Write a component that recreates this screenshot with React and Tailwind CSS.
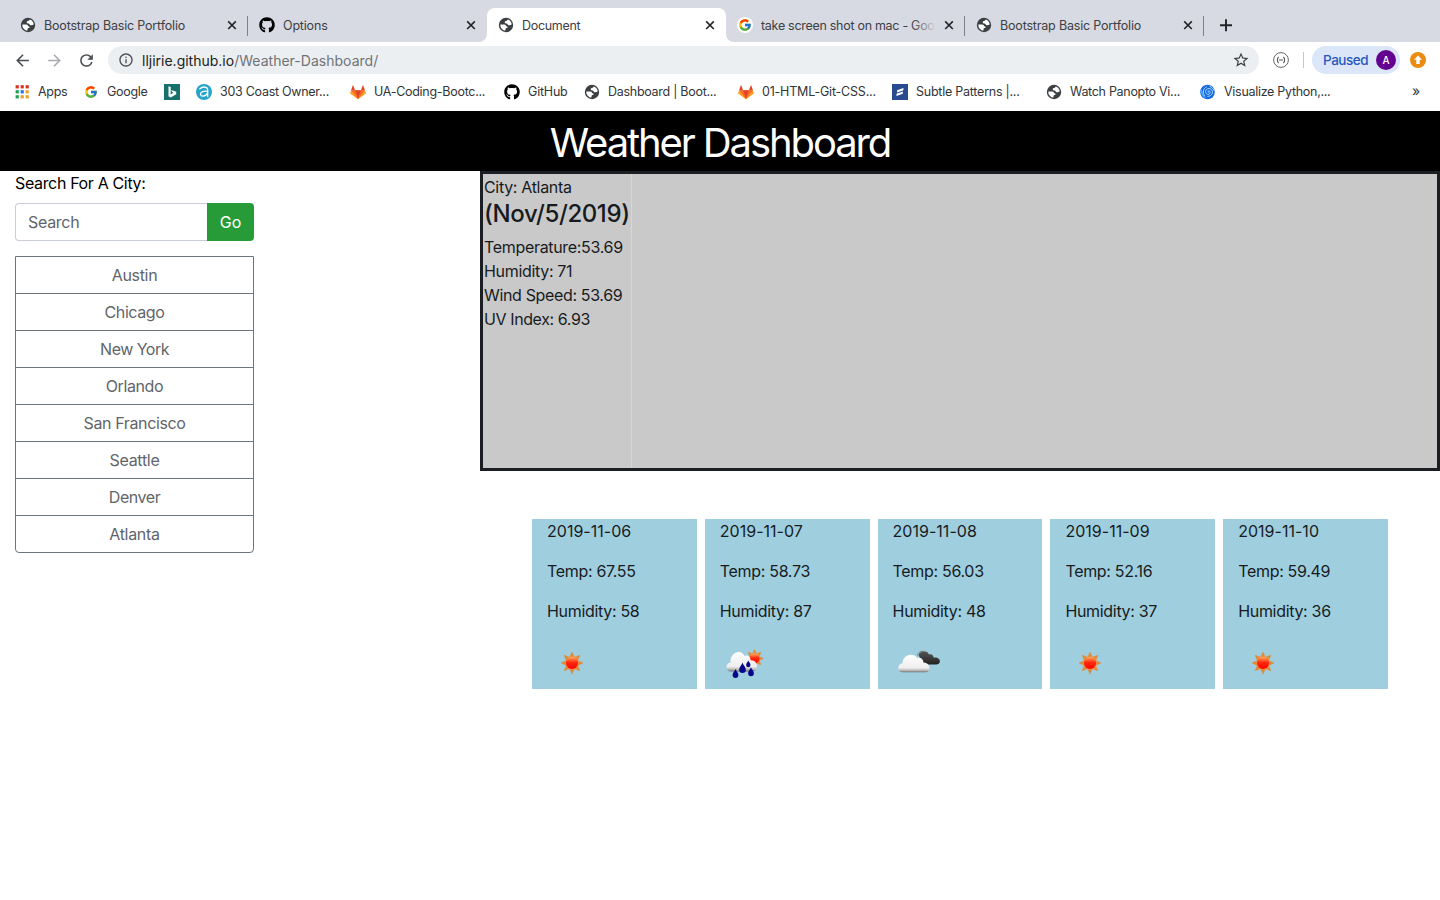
import React from "react";
import { FaGithub } from "react-icons/fa";
import { FcGoogle } from "react-icons/fc";
import { MdArrowBack, MdArrowForward, MdRefresh, MdStarBorder, MdInfoOutline } from "react-icons/md";

function Globe() {
  return (
    <svg viewBox="0 0 16 16" className="size-4 shrink-0">
      <circle cx="8" cy="8" r="7.2" fill="#3c4043" />
      <path d="M9.800 2.500C9.300 3.200 9 3.900 8 4 6.600 4.200 6.500 5.300 7 6c.4.7 1.400.4 2 .7.800.4.600 1.300 1.500 1.500 1 .2 2.300-.1 3.200-.6A5.800 5.800 0 0 0 9.800 2.500Z" fill="#fff" />
      <path d="M2.300 7.500c1.600-.2 3.800-.2 4.900.3.800.4.500 1.200 1.300 1.400.8.200 1.300.6 1 1.300-.2.700-1.700.500-1.900 1.300-.1.700 0 1.300-.4 1.900A5.800 5.800 0 0 1 2.300 7.500Z" fill="#fff" />
    </svg>
  );
}

function GoogleBadge() {
  return (
    <span className="flex size-4 items-center justify-center rounded-full bg-white">
      <FcGoogle className="size-[14px]" />
    </span>
  );
}

function Gitlab() {
  return (
    <svg viewBox="0 0 16 16" className="size-4 shrink-0">
      <path d="M8 15.200 0 9.400 1.100 6.200h13.800L16 9.400Z" fill="#fca326" />
      <path d="M8 15.200 1.100 6.200h3.900ZM8 15.200l6.900-9h-3.900Z" fill="#fc6d26" />
      <path d="m8 15.200 3-9H5Z" fill="#e24329" />
      <path d="M1.100 6.200 3 .7l2 5.500ZM14.900 6.200 13 .7l-2 5.500Z" fill="#e24329" />
    </svg>
  );
}

const appColors = ["#d93025", "#d93025", "#d93025", "#1e9e54", "#2f6fde", "#e8a126", "#1e9e54", "#e8a126", "#e8a126"];

function Apps() {
  return (
    <svg viewBox="0 0 16 16" className="size-4 shrink-0">
      {appColors.map((c, i) => (
        <rect key={i} x={1.600 + (i % 3) * 5} y={1.200 + Math.floor(i / 3) * 5} width="3.200" height="3.200" fill={c} />
      ))}
    </svg>
  );
}

function Bing() {
  return (
    <svg viewBox="0 0 16 16" className="size-4 shrink-0">
      <rect width="16" height="16" fill="#17716b" />
      <path d="M4.500 2.200 6.700 3v7.400l2.700-1.600-1.300-.7-.9-2.200 5 1.800v2.500l-5.500 3.300-2.200-1.300Z" fill="#fff" />
    </svg>
  );
}

function Coast() {
  return (
    <svg viewBox="0 0 16 16" className="size-4 shrink-0">
      <circle cx="8" cy="8" r="8" fill="#27a3cc" />
      <path d="M3.800 4.800C6.500 2.200 11.700 2.300 11.700 6v6.600M11.600 7.200C8 6.700 4.200 7.800 4.500 10.300c.4 2.600 5.600 2.300 7-1.200" fill="none" stroke="#fff" strokeWidth="1.300" strokeLinecap="round" />
    </svg>
  );
}

function Subtle() {
  return (
    <svg viewBox="0 0 16 16" className="size-4 shrink-0">
      <rect width="16" height="16" fill="#284b8f" />
      <path d="m5.100 6.300 6.300-2.200v2.100L5.100 8.400ZM4.500 9.800l6.300-2.200v2.100l-6.300 2.200Z" fill="#fff" />
    </svg>
  );
}

function Spiral() {
  return (
    <svg viewBox="0 0 16 16" className="size-4 shrink-0">
      <circle cx="7.500" cy="8" r="7.300" fill="#1768e0" />
      <path d="M8.200 8.200c-.8-1.300.9-2 1.700-.9 1 1.500-.5 3.300-2.200 3-2.200-.4-2.800-3.200-1.200-4.800C8.300 3.700 11.800 4.600 12.400 7.200c.6 2.800-1.800 5.200-4.600 5.200M4.600 11.600C2.100 8.800 3.100 4.400 6.500 2.900M10 2.500c1.900.7 3.200 2.100 3.900 3.800" fill="none" stroke="#b7ebff" strokeWidth=".9" strokeLinecap="round" />
      <path d="M1 5.500c.5 3.500 2 6.500 4.500 8.500" fill="none" stroke="#45b5ff" strokeWidth="1.400" />
    </svg>
  );
}

const tabs = [
  { title: "Bootstrap Basic Portfolio", icon: <Globe />, track: "tracking-[-0.18px]", line: true },
  { title: "Options", icon: <FaGithub className="size-4 text-black" />, track: "tracking-[-0.18px]" },
  { title: "Document", icon: <Globe />, track: "tracking-[-0.3px]", active: true },
  { title: "take screen shot on mac - Goo", icon: <GoogleBadge />, track: "tracking-[-0.29px]", line: true, fade: true },
  { title: "Bootstrap Basic Portfolio", icon: <Globe />, track: "tracking-[-0.18px]", line: true },
];

function Tab({ title, icon, track, active, line, fade }) {
  return (
    <div
      className={
        "relative flex h-[34px] w-[239px] shrink-0 items-center pl-[11px] text-[#3c4043] " +
        (active ? "rounded-t-lg bg-white" : "")
      }
    >
      {icon}
      <span className={"relative mt-px ml-2 w-[175px] text-[12.500px] leading-5 whitespace-nowrap " + track}>
        {title}
        {fade && <span className="absolute inset-y-0 right-0 w-6 bg-linear-to-r from-transparent to-[#d8dae3]" />}
      </span>
      <svg viewBox="0 0 14 14" className="ml-[6px] size-[14px]" fill="none" stroke="#222427" strokeWidth="1.600">
        <path d="m3.200 3.400 7.600 7.600M10.800 3.400 3.200 11" />
      </svg>
      {line && <span className="absolute top-2 right-0 h-[20px] w-px bg-[#7e8187]" />}
      {active && (
        <>
          <svg viewBox="0 0 8 8" className="absolute bottom-0 -left-2 size-2"><path d="M8 0v8H0a8 8 0 0 0 8-8" fill="#fff" /></svg>
          <svg viewBox="0 0 8 8" className="absolute -right-2 bottom-0 size-2"><path d="M0 0v8h8a8 8 0 0 1-8-8" fill="#fff" /></svg>
        </>
      )}
    </div>
  );
}

const bookmarks = [
  { label: "Apps", icon: <Apps />, w: "w-[69px]", track: "tracking-[-0.3px]" },
  { label: "Google", icon: <FcGoogle className="mx-px size-[14px]" />, w: "w-[81px]", track: "tracking-[-0.3px]" },
  { label: "", icon: <Bing />, w: "w-8", track: "" },
  { label: "303 Coast Owner...", icon: <Coast />, w: "w-[154px]", track: "tracking-[-0.28px]" },
  { label: "UA-Coding-Bootc...", icon: <Gitlab />, w: "w-[154px]", track: "tracking-[-0.28px]" },
  { label: "GitHub", icon: <FaGithub className="size-4 text-black" />, w: "w-20", track: "tracking-[-0.2px]" },
  { label: "Dashboard | Boot...", icon: <Globe />, w: "w-[154px]", track: "tracking-[-0.28px]" },
  { label: "01-HTML-Git-CSS...", icon: <Gitlab />, w: "w-[154px]", track: "tracking-[-0.2px]" },
  { label: "Subtle Patterns |...", icon: <Subtle />, w: "w-[154px]", track: "tracking-[-0.24px]" },
  { label: "Watch Panopto Vi...", icon: <Globe />, w: "w-[154px]", track: "tracking-[-0.3px]" },
  { label: "Visualize Python,...", icon: <Spiral />, w: "w-[154px]", track: "tracking-[-0.29px]" },
];

function Browser() {
  return (
    <header className="bg-white">
      <div className="flex h-[42px] items-end bg-[#d8dae3] pl-[9px]">
        {tabs.map((t, i) => (
          <Tab key={i} {...t} />
        ))}
        <div className="flex h-[34px] items-center pl-[15px]">
          <svg viewBox="0 0 14 14" className="size-[14px]" fill="none" stroke="#222427" strokeWidth="1.900">
            <path d="M7 1.300v12M1 7.300h12" />
          </svg>
        </div>
      </div>
      <div className="flex h-[36px] items-center pl-[13px]">
        <MdArrowBack className="size-[19px] text-[#4b4e52]" />
        <MdArrowForward className="ml-[13px] size-[19px] text-[#a9abae]" />
        <MdRefresh className="ml-[13px] size-[19px] text-[#4b4e52]" />
        <div className="ml-[12px] flex h-7 w-[1151px] items-center rounded-full bg-[#eceff1] pl-[10px] text-[14px]">
          <MdInfoOutline className="size-4 text-[#4b4e52]" />
          <span className="ml-2 text-[#202124]">lljirie.github.io</span>
          <span className="tracking-[0.02px] text-[#6f7378]">/Weather-Dashboard/</span>
          <MdStarBorder className="mr-[9px] ml-auto size-[18px] text-[#3c4043]" />
        </div>
        <svg viewBox="0 0 16 16" className="ml-[14px] size-4" fill="none" stroke="#55585c">
          <circle cx="8" cy="8" r="7.400" strokeWidth=".9" />
          <path d="M5.600 5C4 6.500 4 9.500 5.600 11M10.400 5c1.600 1.500 1.600 4.500 0 6M6 8h4" strokeWidth="1.100" />
        </svg>
        <span className="ml-[14px] h-4 w-px bg-[#c6c8cc]" />
        <div className="ml-[8px] flex h-7 w-[88px] items-center rounded-full bg-[#dbe6f8] pl-[11px] text-[13.500px] font-medium tracking-[-0.300px] text-[#2857c0]">
          <span className="mt-px tracking-[-0.450px]">Paused</span>
          <span className="mr-[4px] ml-auto flex size-5 items-center justify-center rounded-full bg-[#650391] text-[10px] text-white">A</span>
        </div>
        <svg viewBox="0 0 16 16" className="ml-[10px] size-4">
          <circle cx="8" cy="8" r="8" fill="#ea8b12" />
          <path d="m8 3.500 4 4.300H9.700V12H6.300V7.800H4Z" fill="#fff" />
        </svg>
      </div>
      <div className="flex h-[33px] items-center pb-[5px] pl-[14px] text-[12.500px] text-[#323538]">
        {bookmarks.map((b, i) => (
          <div key={i} className={"flex shrink-0 items-center gap-2 whitespace-nowrap " + b.w}>
            {b.icon}
            <span className={b.track}>{b.label}</span>
          </div>
        ))}
        <span className="-mt-[3px] ml-[58px] text-[14px]">»</span>
      </div>
    </header>
  );
}

function SunShape({ x, y, r }) {
  return (
    <g transform={`translate(${x} ${y})`}>
      {[0, 45, 90, 135, 180, 225, 270, 315].map((a) => (
        <path key={a} d={`M${-r * 0.18} ${-r * 0.6}L0 ${-r}L${r * 0.18} ${-r * 0.6}Z`} fill="#dd8a3c" stroke="#dd8a3c" strokeWidth=".5" transform={`rotate(${a})`} />
      ))}
      <circle r={r * 0.63} fill="#f58b35" />
      <circle r={r * 0.55} fill="url(#sunFill)" />
    </g>
  );
}

function WeatherIcon({ kind }) {
  return (
    <svg viewBox="0 0 50 50" className="-mt-px size-[50px]">
      <defs>
        <linearGradient id="sunFill" x1="0" y1="0" x2="0" y2="1">
          <stop offset="0" stopColor="#ffb066" />
          <stop offset=".45" stopColor="#ff2a0c" />
          <stop offset="1" stopColor="#fb0500" />
        </linearGradient>
        <linearGradient id="cloudFill" x1="0" y1="0" x2="0" y2="1">
          <stop offset="0" stopColor="#fff" />
          <stop offset=".75" stopColor="#eeeeee" />
          <stop offset=".9" stopColor="#b5b5b5" />
          <stop offset="1" stopColor="#6b6b6b" />
        </linearGradient>
        <linearGradient id="darkFill" x1="0" y1="0" x2="0" y2="1">
          <stop offset="0" stopColor="#555" />
          <stop offset="1" stopColor="#222" />
        </linearGradient>
      </defs>
      {kind === "sun" && <SunShape x={25} y={25} r={11} />}
      {kind === "rain" && (
        <>
          <SunShape x={34.500} y={20.500} r={9} />
          <path d="M11 33.500c-6 0-6-8.200-.4-9C9.800 13.800 21.500 10.800 24.500 18c3-1.300 6.200.8 6 4.300 8-.6 8.700 11.200 1.400 11.200Z" fill="url(#cloudFill)" />
          {[[15.500, 36, 1], [22.500, 30.500, 1.150], [28.300, 26.300, 0.750], [31, 34.300, 1]].map(([x, y, s]) => (
            <path key={x} d="M0-5C1-2.500 2.900-1.200 2.900 1A2.900 2.900 0 0 1-2.900 1C-2.900-1.200-1-2.500 0-5Z" fill="#06068c" transform={`translate(${x} ${y}) scale(${s})`} />
          ))}
        </>
      )}
      {kind === "cloud" && (
        <g transform="translate(1.6 0)">
          <path d="M24 17c2-5 9-4.500 10.300-.6 2.600-.8 4.700 1 4.500 3.200 3.500-.8 6.700 1 6.500 3.800-.2 2.600-3 3.200-5 3.200H28Z" fill="url(#darkFill)" />
          <path d="M23 17.500c0-3 4-5.500 7.500-3.500" fill="none" stroke="#777" />
          <path d="M8.500 34.300c-6.500 0-6-8.600-.5-9 0-9 11-11 14.500-5.300 3-1.200 6.300.8 6.300 4.500 6.700-.5 8.700 9.800 2 9.800Z" fill="url(#cloudFill)" />
        </g>
      )}
    </svg>
  );
}

const cities = [
  ["Austin", "tracking-[-0.3px]"],
  ["Chicago", "tracking-[-0.4px]"],
  ["New York", "tracking-[-0.52px]"],
  ["Orlando", "tracking-[-0.4px]"],
  ["San Francisco", "tracking-[-0.38px]"],
  ["Seattle", "tracking-[-0.3px]"],
  ["Denver", "tracking-[-0.45px]"],
  ["Atlanta", "tracking-[-0.3px]"],
];

const forecast = [
  { date: "2019-11-06", temp: "67.55", humidity: 58, kind: "sun" },
  { date: "2019-11-07", temp: "58.73", humidity: 87, kind: "rain" },
  { date: "2019-11-08", temp: "56.03", humidity: 48, kind: "cloud" },
  { date: "2019-11-09", temp: "52.16", humidity: 37, kind: "sun" },
  { date: "2019-11-10", temp: "59.49", humidity: 36, kind: "sun" },
];

export default function App() {
  return (
    <div className="flex h-[900px] w-[1440px] flex-col overflow-hidden bg-white font-['Inter',sans-serif] text-[#181b1e]">
      <Browser />
      <h1 className="flex h-[60px] items-center justify-center bg-black pt-1 text-[40px] leading-[48px] tracking-[-2.100px] text-white">
        Weather Dashboard
      </h1>
      <main className="flex">
        <aside className="w-[480px] pl-[15px]">
          <p className="h-[32px] text-[16px] leading-[25px] tracking-[-0.350px] text-black">Search For A City:</p>
          <form className="flex h-[38px] w-[239px]">
            <div className="flex w-[192px] items-center rounded-l border border-r-0 border-[#c9ced4] pl-3 text-[16px] tracking-[-0.300px] text-[#5f656b]">
              Search
            </div>
            <button type="button" className="w-[47px] rounded-r bg-[#279b37] text-[16px] text-white">Go</button>
          </form>
          <ul className="mt-[15px] w-[239px] divide-y divide-[#6c757d] rounded-b border border-[#6c757d]">
            {cities.map(([name, track]) => (
              <li key={name} className="flex h-[37px] items-center justify-center text-[16px] text-[#5f656b] last:h-9">
                <span className={track}>{name}</span>
              </li>
            ))}
          </ul>
        </aside>
        <section className="w-[960px]">
          <div className="flex h-[300px] border-[3px] border-[#1b1e22] bg-[#c9c9c9]">
            <div className="w-[149px] border-r border-[#d6d7da] pt-px pl-px text-[16px] leading-6 tracking-[-0.320px] whitespace-nowrap">
              <p>City: Atlanta</p>
              <h4 className="mb-[7px] text-[24px] leading-[29px] font-medium tracking-[-0.400px]">(Nov/5/2019)</h4>
              <p>Temperature:53.69</p>
              <p>Humidity: 71</p>
              <p className="tracking-[-0.350px]">Wind Speed: 53.69</p>
              <p className="tracking-[-0.400px]">UV Index: 6.93</p>
            </div>
          </div>
          <div className="mt-12 ml-[52px] grid h-[170px] w-[856px] grid-cols-5 gap-2 text-[16px] leading-6 tracking-[-0.320px]">
            {forecast.map((f) => (
              <article key={f.date} className="flex flex-col gap-4 bg-[#9fcfde] pl-[15px]">
                <p className="tracking-[0.020px]">{f.date}</p>
                <p>Temp: {f.temp}</p>
                <p>Humidity: {f.humidity}</p>
                <WeatherIcon kind={f.kind} />
              </article>
            ))}
          </div>
        </section>
      </main>
    </div>
  );
}
